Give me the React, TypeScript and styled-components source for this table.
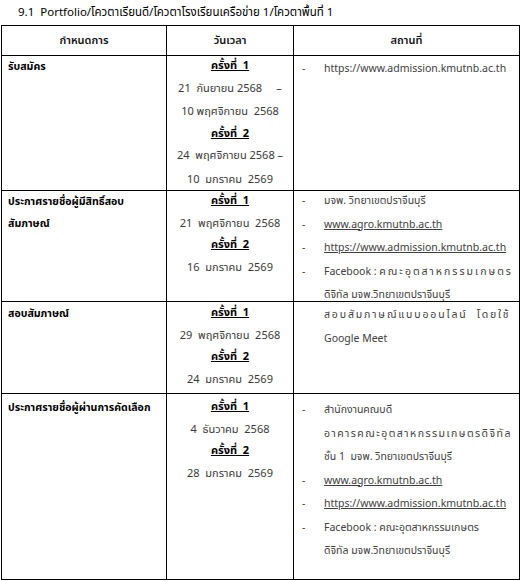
import React from 'react'
import styled, { createGlobalStyle } from 'styled-components'

const GlobalStyle = createGlobalStyle`
  html, body {
    margin: 0;
    padding: 0;
    background: #fff;
  }
  body {
    font-family: Tahoma, "Noto Sans Thai", "Noto Sans", "DejaVu Sans", sans-serif;
    color: #000;
  }
`

type Line = { text: string; link?: boolean; spread?: number; prefix?: string }
type Item = { lines: Line[]; bullet?: boolean }
type Round = { title: string; dates: string[] }
type Row = { name: string[]; rounds: Round[]; places: Item[]; height: number; nameTop: number; placeTop: number; dateTop: number }

const rows: Row[] = [
  {
    name: ['รับสมัคร'],
    height: 135,
    nameTop: 0,
    dateTop: 0,
    placeTop: 2,
    rounds: [
      { title: 'ครั้งที่  1', dates: ['21  กันยายน 2568     –', '10 พฤศจิกายน  2568'] },
      { title: 'ครั้งที่  2', dates: ['24  พฤศจิกายน 2568 –', '10  มกราคม  2569'] },
    ],
    places: [{ bullet: true, lines: [{ text: 'https://www.admission.kmutnb.ac.th' }] }],
  },
  {
    name: ['ประกาศรายชื่อผู้มีสิทธิ์สอบ', 'สัมภาษณ์'],
    height: 111,
    nameTop: 0,
    dateTop: 0,
    placeTop: -1,
    rounds: [
      { title: 'ครั้งที่  1', dates: ['21  พฤศจิกายน  2568'] },
      { title: 'ครั้งที่  2', dates: ['16  มกราคม  2569'] },
    ],
    places: [
      { bullet: true, lines: [{ text: 'มจพ. วิทยาเขตปราจีนบุรี' }] },
      { bullet: true, lines: [{ text: 'www.agro.kmutnb.ac.th', link: true }] },
      { bullet: true, lines: [{ text: 'https://www.admission.kmutnb.ac.th', link: true }] },
      {
        bullet: true,
        lines: [
          { prefix: 'Facebook : ', text: 'คณะอุตสาหกรรมเกษตร', spread: 2.0 },
          { text: 'ดิจิทัล มจพ.วิทยาเขตปราจีนบุรี' },
        ],
      },
    ],
  },
  {
    name: ['สอบสัมภาษณ์'],
    height: 92,
    nameTop: 1,
    dateTop: 1,
    placeTop: 2,
    rounds: [
      { title: 'ครั้งที่  1', dates: ['29  พฤศจิกายน  2568'] },
      { title: 'ครั้งที่  2', dates: ['24  มกราคม  2569'] },
    ],
    places: [
      { lines: [{ text: 'สอบสัมภาษณ์แบบออนไลน์  โดยใช้', spread: 1.85 }, { text: 'Google Meet' }] },
    ],
  },
  {
    name: ['ประกาศรายชื่อผู้ผ่านการคัดเลือก'],
    height: 186,
    nameTop: 3,
    dateTop: 3,
    placeTop: 5,
    rounds: [
      { title: 'ครั้งที่  1', dates: ['4  ธันวาคม  2568'] },
      { title: 'ครั้งที่  2', dates: ['28  มกราคม  2569'] },
    ],
    places: [
      {
        bullet: true,
        lines: [
          { text: 'สำนักงานคณบดี' },
          { text: 'อาคารคณะอุตสาหกรรมเกษตรดิจิทัล', spread: 1.45 },
          { text: 'ชั้น 1  มจพ. วิทยาเขตปราจีนบุรี' },
        ],
      },
      { bullet: true, lines: [{ text: 'www.agro.kmutnb.ac.th', link: true }] },
      { bullet: true, lines: [{ text: 'https://www.admission.kmutnb.ac.th', link: true }] },
      {
        bullet: true,
        lines: [{ text: 'Facebook : คณะอุตสาหกรรมเกษตร' }, { text: 'ดิจิทัล มจพ.วิทยาเขตปราจีนบุรี' }],
      },
    ],
  },
]

export default function App() {
  return (
    <Page>
      <GlobalStyle />
      <Heading>9.1&nbsp; Portfolio/โควตาเรียนดี/โควตาโรงเรียนเครือข่าย 1/โควตาพื้นที่ 1</Heading>
      <Table>
        <colgroup>
          <col style={{ width: 165 }} />
          <col style={{ width: 127 }} />
          <col style={{ width: 226 }} />
        </colgroup>
        <thead>
          <tr>
            <HeadCell>กำหนดการ</HeadCell>
            <HeadCell>วันเวลา</HeadCell>
            <HeadCell>สถานที่</HeadCell>
          </tr>
        </thead>
        <tbody>
          {rows.map((row, i) => (
            <tr key={i} style={{ height: row.height }}>
              <NameCell>
                <Shift $top={row.nameTop}>
                  {row.name.map((n) => (
                    <div key={n}>{n}</div>
                  ))}
                </Shift>
              </NameCell>
              <DateCell>
                <Shift $top={row.dateTop}>
                  {row.rounds.map((r) => (
                    <React.Fragment key={r.title}>
                      <RoundTitle>{r.title}</RoundTitle>
                      {r.dates.map((d) => (
                        <DateLine key={d}>{d}</DateLine>
                      ))}
                    </React.Fragment>
                  ))}
                </Shift>
              </DateCell>
              <PlaceCell>
                <Shift $top={row.placeTop}>
                  {row.places.map((p, j) => (
                    <PlaceItem key={j}>
                      <Bullet>{p.bullet ? '-' : ''}</Bullet>
                      <div>
                        {p.lines.map((l, k) => (
                          <PlaceLine key={k} $link={l.link}>
                            {l.prefix}
                            {l.spread ? <Spread $ls={l.spread}>{l.text}</Spread> : l.text}
                          </PlaceLine>
                        ))}
                      </div>
                    </PlaceItem>
                  ))}
                </Shift>
              </PlaceCell>
            </tr>
          ))}
        </tbody>
      </Table>
    </Page>
  )
}

const Page = styled.div`
  width: 523px;
  padding: 0 0 0 1px;
  box-sizing: border-box;
`

const Heading = styled.div`
  height: 25px;
  padding-left: 17px;
  font-size: 11.5px;
  line-height: 25px;
  font-weight: 400;
  color: #000;
`

const Table = styled.table`
  width: 519px;
  border-collapse: collapse;
  table-layout: fixed;
  font-size: 11px;

  td,
  th {
    border: 1.5px solid #000;
    vertical-align: top;
    padding: 0;
  }
`

// nudges a cell's content so it sits where the document placed it,
// without letting it grow the row
const Shift = styled.div<{ $top: number }>`
  margin-top: ${(p) => p.$top}px;
  margin-bottom: -12px;
`

const HeadCell = styled.th`
  height: 29px;
  vertical-align: middle !important;
  text-align: center;
  font-weight: 600;
  font-size: 11px;
  color: #111;
`

const NameCell = styled.td`
  padding: 0 0 0 6px !important;
  font-weight: 700;
  font-size: 10.6px;
  line-height: 22px;
  color: #000;
`

const DateCell = styled.td`
  text-align: center;
  color: #3a3a3a;
  white-space: pre;
`

const RoundTitle = styled.div`
  font-weight: 700;
  text-decoration: underline;
  color: #000;
  line-height: 20.5px;
`

const DateLine = styled.div`
  line-height: 23.5px;
`

const PlaceCell = styled.td`
  padding: 0 4px 0 8px !important;
  color: #404040;
  font-size: 10.5px;
`

const PlaceItem = styled.div`
  display: flex;
`

const Bullet = styled.div`
  width: 22px;
  flex: none;
  line-height: 23.5px;
`

const PlaceLine = styled.div<{ $link?: boolean }>`
  line-height: 23.5px;
  white-space: pre;
  text-decoration: ${(p) => (p.$link ? 'underline' : 'none')};
`

const Spread = styled.span<{ $ls: number }>`
  letter-spacing: ${(p) => p.$ls}px;
`
